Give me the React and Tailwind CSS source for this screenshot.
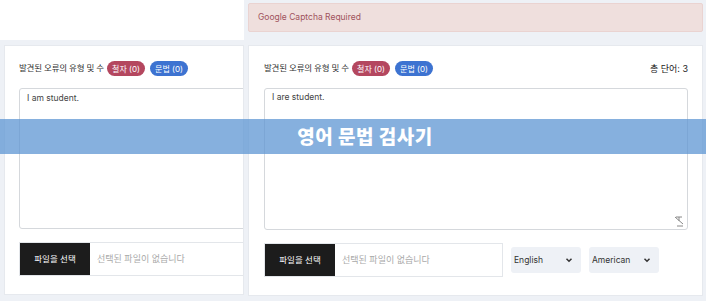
import React from 'react';

const font = { fontFamily: 'Inter, "Noto Sans CJK KR", sans-serif' };

const Badges = () => (
  <div className="flex items-center">
    <span className="text-[8.5px] text-[#333] tracking-[-0.2px]">발견된 오류의 유형 및 수</span>
    <span className="ml-[3px] h-[15px] w-[38px] rounded-full bg-[#b4475f] text-white text-[8px] flex items-center justify-center">철자 (0)</span>
    <span className="ml-[5px] h-[15px] w-[38px] rounded-full bg-[#3d73d1] text-white text-[8px] flex items-center justify-center">문법 (0)</span>
  </div>
);

const FileInput = ({ className }) => (
  <div className={`flex h-[34px] border border-[#e3e6ea] bg-white ${className}`}>
    <div className="w-[70px] shrink-0 bg-[#1c1c1c] text-white text-[8.5px] flex items-center justify-center">파일을 선택</div>
    <div className="pl-[7px] flex items-center text-[9px] text-[#a9a9a9] whitespace-nowrap">선택된 파일이 없습니다</div>
  </div>
);

const Select = ({ label, className }) => (
  <div className={`h-[26px] rounded-[3px] bg-[#eef1f6] flex items-center justify-between pl-[3px] pr-[8px] text-[8.5px] text-[#333] ${className}`}>
    <span>{label}</span>
    <svg width="8" height="6" viewBox="0 0 8 6"><path d="M1.5 1.8 4 4.2 6.5 1.8" fill="none" stroke="#333" strokeWidth="1.5" /></svg>
  </div>
);

export default function App() {
  return (
    <div style={font} className="relative w-[706px] h-[301px] overflow-hidden bg-[#eef1f6] flex">
      {/* left column */}
      <div className="w-[244px] shrink-0 flex flex-col">
        <div className="h-[40px] bg-white" />
        <div className="ml-[4px] mt-[5px] h-[250px] bg-white border border-[#e6e9ee] overflow-hidden pl-[14px] pt-[15px]">
          <Badges />
          <div className="mt-[12px] w-[300px] h-[141px] border border-[#d5d8dc] rounded-[3px] px-[7px] pt-[3px] text-[8.5px] text-[#444]">I am student.</div>
          <FileInput className="mt-[13px] w-[300px]" />
        </div>
      </div>

      {/* right column */}
      <div className="ml-[4px] w-[455px] shrink-0 flex flex-col pt-[3px]">
        <div className="h-[29px] bg-[#efdfdd] border border-[#ead3d1] rounded-[2px] pl-[9px] flex items-center text-[8.5px] text-[#a0525c]">Google Captcha Required</div>
        <div className="mt-[13px] h-[251px] bg-white border border-[#e6e9ee] pl-[15px] pr-[14px] pt-[15px]">
          <div className="flex items-center justify-between">
            <Badges />
            <span className="text-[9px] text-[#222]">총 단어: 3</span>
          </div>
          <div className="relative mt-[12px] h-[142px] border border-[#d5d8dc] rounded-[3px] px-[7px] pt-[2px] text-[8.5px] text-[#444]">
            I are student.
            <svg className="absolute right-[2px] bottom-[1px]" width="12" height="14" viewBox="0 0 12 14">
              <path d="M2 3 L10 10 M3 3 H9 M6 3 V7 M4 12 L10 12" fill="none" stroke="#888" strokeWidth="1" />
            </svg>
          </div>
          <div className="mt-[13px] flex items-center">
            <FileInput className="w-[239px]" />
            <Select label="English" className="ml-[8px] w-[70px]" />
            <Select label="American" className="ml-[8px] w-[70px]" />
          </div>
        </div>
      </div>

      {/* overlay banner */}
      <div className="absolute left-0 top-[119px] w-full h-[35px] bg-[#5e96d3]/75 flex items-center justify-center pl-[24px]">
        <span className="text-white text-[19px] font-black tracking-[0.5px]" style={{ fontFamily: '"Noto Sans CJK KR", sans-serif' }}>영어 문법 검사기</span>
      </div>
    </div>
  );
}
